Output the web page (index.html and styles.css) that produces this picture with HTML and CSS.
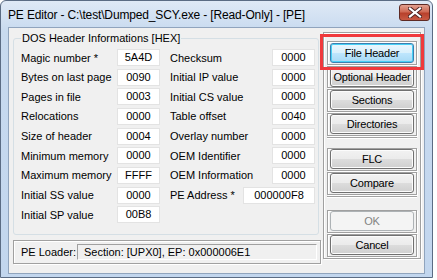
FILE: index.html
```html
<!DOCTYPE html>
<html>
<head>
<meta charset="utf-8">
<link rel="stylesheet" href="styles.css">
</head>
<body>
<div class="window">
  <div class="titlebar">
    <span class="title">PE Editor - C:\test\Dumped_SCY.exe - [Read-Only] - [PE]</span>
    <span class="close"><svg width="14" height="11" viewBox="0 0 14 11"><path d="M2 1.5 L12 9.5 M12 1.5 L2 9.5" stroke="#4a2020" stroke-width="4" stroke-linecap="square"/><path d="M2 1.5 L12 9.5 M12 1.5 L2 9.5" stroke="#ffffff" stroke-width="2.2" stroke-linecap="square"/></svg></span>
  </div>
  <div class="client">
    <div class="leftcol">
      <fieldset class="group">
        <legend>DOS Header Informations [HEX]</legend>
        <div class="rows">
          <div class="row"><span class="lbl l1">Magic number *</span><span class="edit">5A4D</span><span class="lbl l2">Checksum</span><span class="edit">0000</span></div>
          <div class="row"><span class="lbl l1">Bytes on last page</span><span class="edit">0090</span><span class="lbl l2">Initial IP value</span><span class="edit">0000</span></div>
          <div class="row"><span class="lbl l1">Pages in file</span><span class="edit">0003</span><span class="lbl l2">Initial CS value</span><span class="edit">0000</span></div>
          <div class="row"><span class="lbl l1">Relocations</span><span class="edit">0000</span><span class="lbl l2">Table offset</span><span class="edit">0040</span></div>
          <div class="row"><span class="lbl l1">Size of header</span><span class="edit">0004</span><span class="lbl l2">Overlay number</span><span class="edit">0000</span></div>
          <div class="row"><span class="lbl l1">Minimum memory</span><span class="edit">0000</span><span class="lbl l2">OEM Identifier</span><span class="edit">0000</span></div>
          <div class="row"><span class="lbl l1">Maximum memory</span><span class="edit">FFFF</span><span class="lbl l2">OEM Information</span><span class="edit">0000</span></div>
          <div class="row"><span class="lbl l1">Initial SS value</span><span class="edit">0000</span><span class="lbl l3">PE Address *</span><span class="edit wide">000000F8</span></div>
          <div class="row"><span class="lbl l1">Initial SP value</span><span class="edit">00B8</span></div>
        </div>
      </fieldset>
      <div class="status">
        <span class="slbl">PE Loader:</span>
        <span class="sfield">Section: [UPX0], EP: 0x000006E1</span>
      </div>
    </div>
    <div class="panel">
      <div class="cell"><button class="btn default">File Header</button></div>
      <div class="cell"><button class="btn">Optional Header</button></div>
      <div class="cell"><button class="btn">Sections</button></div>
      <div class="cell"><button class="btn">Directories</button></div>
      <div class="spacer"></div>
      <div class="cell"><button class="btn">FLC</button></div>
      <div class="cell"><button class="btn">Compare</button></div>
      <div class="spacer s2"></div>
      <div class="cell"><button class="btn disabled">OK</button></div>
      <div class="cell"><button class="btn">Cancel</button></div>
      <div class="highlight"></div>
    </div>
  </div>
</div>
</body>
</html>
```

FILE: styles.css
```css
html, body {
  margin: 0;
  padding: 0;
  background: #ffffff;
}
body {
  width: 437px;
  height: 280px;
  overflow: hidden;
  font-family: "Liberation Sans", Arial, sans-serif;
  font-size: 11px;
  color: #000;
}
.window {
  box-sizing: border-box;
  width: 433px;
  height: 278px;
  border: 1px solid #5b6c84;
  border-radius: 6px 6px 0 0;
  background: linear-gradient(#dfe9f6, #c8daef 30px, #c2d6ee);
  padding: 0 7px 3px 7px;
  display: flex;
  flex-direction: column;
}
.titlebar {
  height: 26px;
  display: flex;
  align-items: center;
  flex: none;
}
.title {
  font-size: 12px;
  letter-spacing: -0.15px;
  margin-top: 2px;
  color: #000;
}
.close {
  margin-left: auto;
  margin-right: -5px;
  margin-top: -4px;
  width: 31px;
  height: 17px;
  box-sizing: border-box;
  border: 1px solid #5e2a24;
  border-radius: 3px;
  background: linear-gradient(#e3a08f, #cf6a55 45%, #b8412c 55%, #c85a44);
  display: flex;
  align-items: center;
  justify-content: center;
}
.client {
  flex: 1;
  box-sizing: border-box;
  border: 1px solid #90a4bd;
  background: #f0f0f0;
  display: flex;
  padding: 4px 0 0 4px;
}
.leftcol {
  width: 306px;
  display: flex;
  flex-direction: column;
}
.group {
  margin: 0;
  padding: 4px 3px 0 7px;
  border: 1px solid #d5dfe5;
  border-radius: 3px;
  height: 203px;
  box-sizing: border-box;
}
.group legend {
  padding: 0 1px;
  margin-left: 0;
  line-height: 13px;
}
.rows {
  display: flex;
  flex-direction: column;
  gap: 2.66px;
}
.row {
  display: flex;
  align-items: center;
  height: 17px;
}
.lbl {
  white-space: nowrap;
}
.l1 { width: 96px; }
.l2 { width: 102px; margin-left: 10px; }
.l3 { width: 73px; margin-left: 10px; }
.edit {
  box-sizing: border-box;
  width: 43px;
  height: 17px;
  background: #fff;
  border: 1px solid #e3e3e3;
  text-align: center;
  line-height: 15px;
}
.edit.wide { width: 72px; }
.status {
  margin-top: 5px;
  height: 24px;
  box-sizing: border-box;
  border: 1px solid #a0a0a0;
  box-shadow: inset 1px 1px #fff, 1px 1px #fff;
  display: flex;
  align-items: center;
  padding-left: 7px;
  width: 308px;
}
.slbl { width: 56px; }
.sfield {
  box-sizing: border-box;
  height: 16px;
  width: 240px;
  border: 1px solid #a0a0a0;
  border-right-color: #fff;
  border-bottom-color: #fff;
  padding-left: 6px;
  line-height: 14px;
}
.panel {
  position: relative;
  margin-left: 4px;
  width: 98px;
  height: 227px;
  box-sizing: border-box;
  border: 1px solid #a0a0a0;
  box-shadow: inset 1px 1px #fff, 1px 1px #fff;
  padding: 8px 3px 0 3px;
  display: flex;
  flex-direction: column;
}
.cell {
  box-sizing: border-box;
  height: 24px;
  border: 1px solid #a0a0a0;
  box-shadow: inset 1px 1px #fff, 1px 1px #fff;
  display: flex;
  align-items: center;
  justify-content: center;
  margin-bottom: 1px;
}
.cell:first-child { height: 25px; }
.cell:nth-child(2) { height: 22px; }
.spacer { height: 10px; border-top: 1px solid #a0a0a0; box-shadow: 0 1px #fff inset; }
.spacer.s2 { height: 14px; }
.btn {
  box-sizing: border-box;
  width: 84px;
  height: 20px;
  font-family: "Liberation Sans", Arial, sans-serif;
  font-size: 11px;
  letter-spacing: -0.2px;
  color: #000;
  padding: 0;
  border: 1px solid #707070;
  border-radius: 3px;
  background: linear-gradient(#f2f2f2, #ebebeb 50%, #dddddd 50%, #cfcfcf);
  box-shadow: inset 0 0 0 1px #fcfcfc;
}
.btn.default {
  border-color: #3c7fb1;
  box-shadow: inset 0 0 0 1px #48d0f5;
  background: linear-gradient(#eaf6fd, #d9f0fc 50%, #bee6fd 50%, #a7d9f5);
}
.btn.disabled {
  border-color: #adb2b5;
  background: #f4f4f4;
  color: #838383;
  box-shadow: none;
}
.highlight {
  position: absolute;
  left: -4px;
  top: 1px;
  width: 104px;
  height: 36px;
  box-sizing: border-box;
  border: 3px solid #f0393c;
}
```
